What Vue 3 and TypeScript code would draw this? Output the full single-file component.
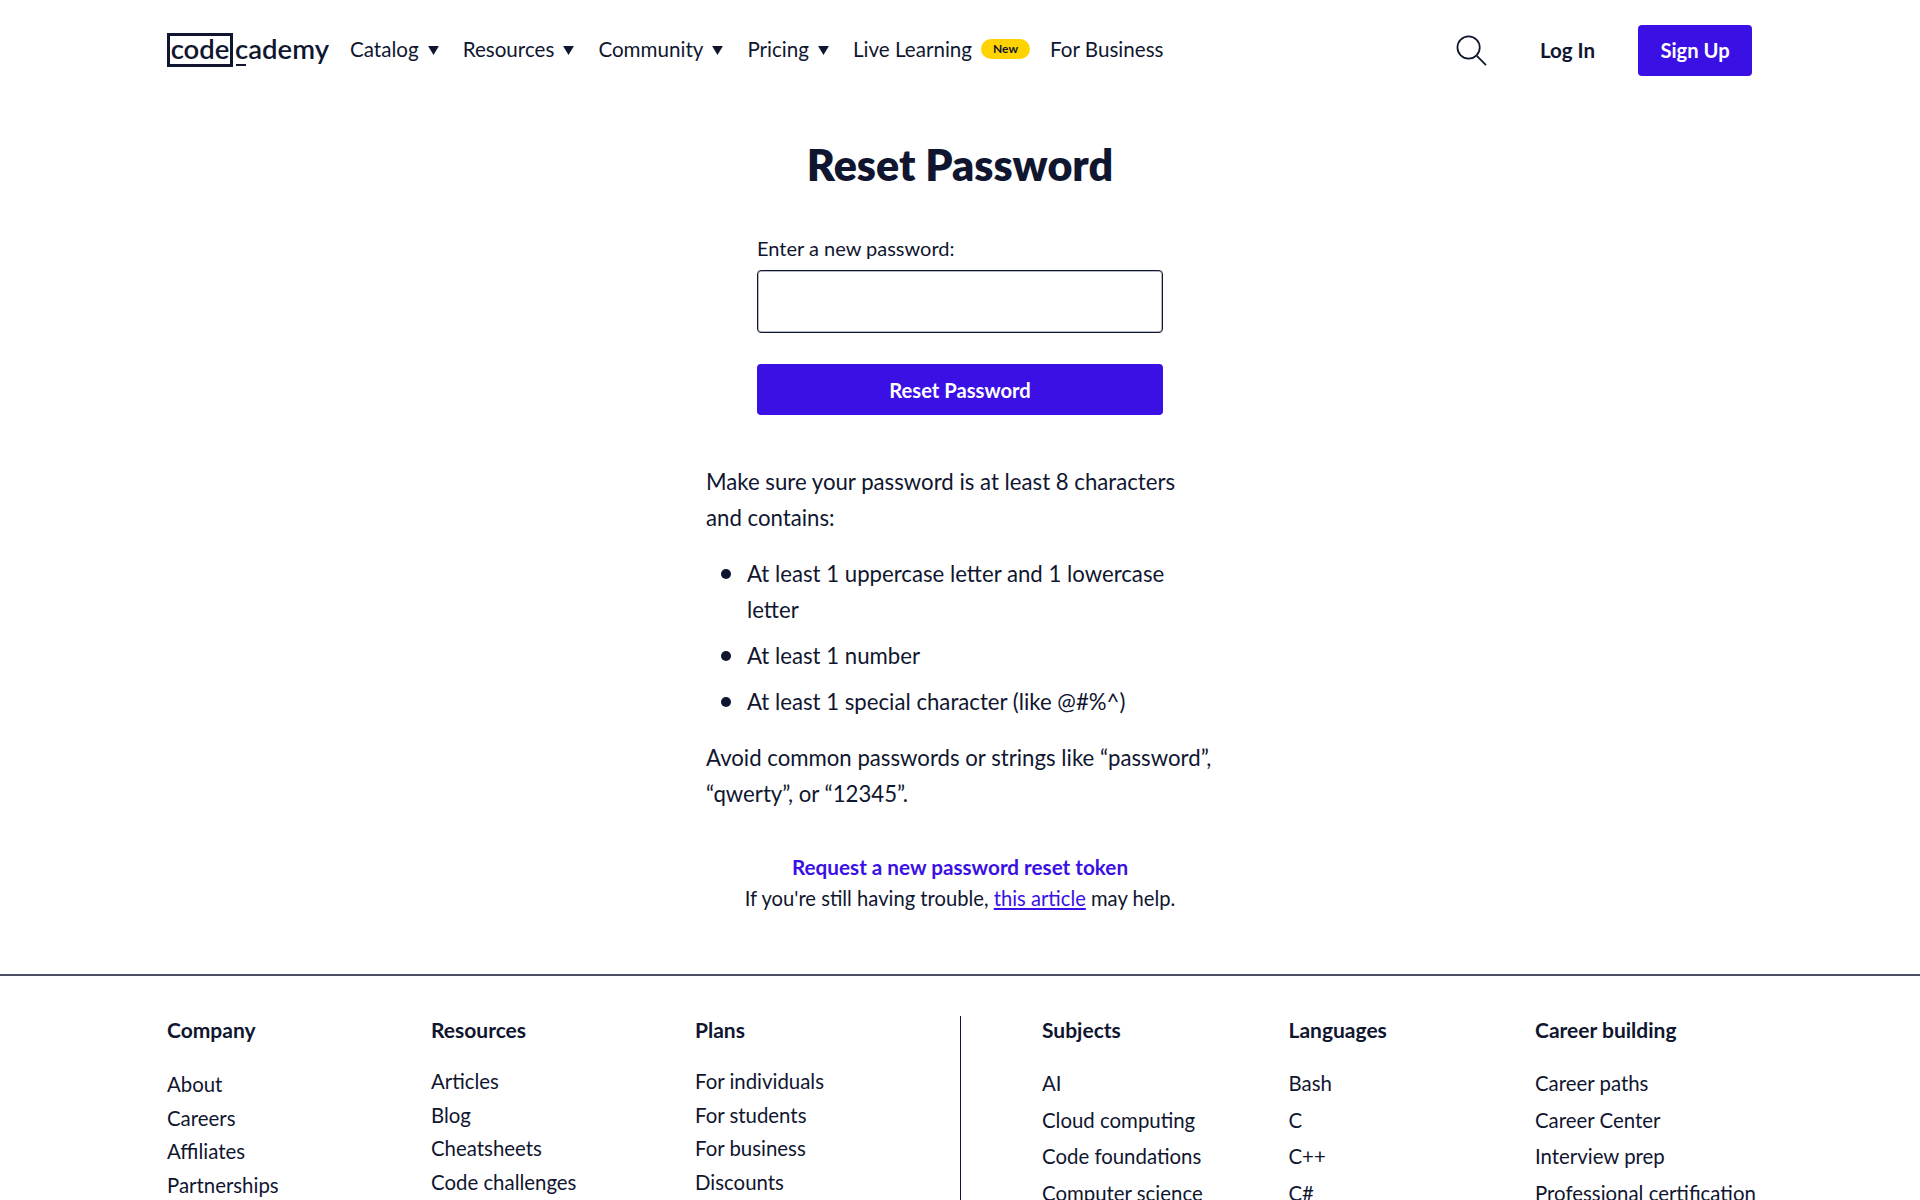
<script setup lang="ts">
interface NavItem {
  label: string
  caret?: boolean
  badge?: string
}

interface FooterColumn {
  title: string
  links: string[]
}

const navItems: NavItem[] = [
  { label: 'Catalog', caret: true },
  { label: 'Resources', caret: true },
  { label: 'Community', caret: true },
  { label: 'Pricing', caret: true },
  { label: 'Live Learning', badge: 'New' },
  { label: 'For Business' },
]

const leftColumns: FooterColumn[] = [
  { title: 'Company', links: ['About', 'Careers', 'Affiliates', 'Partnerships'] },
  { title: 'Resources', links: ['Articles', 'Blog', 'Cheatsheets', 'Code challenges'] },
  { title: 'Plans', links: ['For individuals', 'For students', 'For business', 'Discounts'] },
]

const rightColumns: FooterColumn[] = [
  { title: 'Subjects', links: ['AI', 'Cloud computing', 'Code foundations', 'Computer science'] },
  { title: 'Languages', links: ['Bash', 'C', 'C++', 'C#'] },
  { title: 'Career building', links: ['Career paths', 'Career Center', 'Interview prep', 'Professional certification'] },
]
</script>

<template>
  <div class="page">
    <header class="topbar">
      <a class="logo">
        <span class="logo-box">code</span><span class="logo-rest">cademy</span>
      </a>
      <nav class="nav">
        <a v-for="item in navItems" :key="item.label" class="nav-item">
          {{ item.label }}
          <svg v-if="item.caret" class="caret" viewBox="0 0 12 10" width="12" height="10">
            <path d="M0 0h12L6 10z" fill="#10162f" />
          </svg>
          <span v-if="item.badge" class="badge">{{ item.badge }}</span>
        </a>
      </nav>
      <div class="actions">
        <svg class="search" viewBox="0 0 32 32" width="31" height="31" fill="none" stroke="#10162f" stroke-width="1.8">
          <circle cx="13" cy="13" r="11.5" />
          <path d="M21.5 21.5L31 31" />
        </svg>
        <a class="login">Log In</a>
        <button class="signup">Sign Up</button>
      </div>
    </header>

    <main class="content">
      <h1 class="title">Reset Password</h1>
      <form class="form" @submit.prevent>
        <label class="label" for="new-password">Enter a new password:</label>
        <input id="new-password" class="input" type="password" />
        <button class="submit">Reset Password</button>
      </form>

      <div class="rules">
        <p>Make sure your password is at least 8 characters and contains:</p>
        <ul>
          <li>At least 1 uppercase letter and 1 lowercase letter</li>
          <li>At least 1 number</li>
          <li>At least 1 special character (like @#%^)</li>
        </ul>
        <p>Avoid common passwords or strings like “password”, “qwerty”, or “12345”.</p>
      </div>

      <div class="help">
        <a class="token-link">Request a new password reset token</a>
        <p>If you're still having trouble, <a class="article-link">this article</a> may help.</p>
      </div>
    </main>

    <footer class="footer">
      <div class="footer-inner">
        <div class="footer-left">
          <div v-for="(col, i) in leftColumns" :key="col.title" class="col" :class="{ 'col-tight': i > 0 }">
            <h3>{{ col.title }}</h3>
            <a v-for="link in col.links" :key="link">{{ link }}</a>
          </div>
        </div>
        <div class="footer-right">
          <div v-for="col in rightColumns" :key="col.title" class="col col-wide">
            <h3>{{ col.title }}</h3>
            <a v-for="link in col.links" :key="link">{{ link }}</a>
          </div>
        </div>
      </div>
    </footer>
  </div>
</template>

<style>
html,
body {
  margin: 0;
  background: #fff;
}
</style>

<style scoped>
.page {
  height: 1200px;
  overflow: hidden;
  color: #10162f;
  font-family: Lato, "Noto Sans", sans-serif;
}

.topbar {
  display: flex;
  align-items: center;
  height: 100px;
  padding: 0 168px 0 167px;
}

.logo {
  display: flex;
  flex-shrink: 0;
  align-items: center;
  width: 162px;
  font-size: 27.5px;
  font-weight: 600;
  line-height: 1;
}

.logo-box {
  box-sizing: border-box;
  width: 67px;
  height: 34px;
  border: 3px solid #10162f;
  text-align: center;
  line-height: 26px;
}

.logo-rest {
  margin-left: 2px;
  position: relative;
  top: -1px;
}

.logo-rest::after {
  content: "";
  position: absolute;
  left: 1px;
  bottom: -3px;
  width: 10px;
  height: 2px;
  background: #10162f;
}

.nav {
  display: flex;
  align-items: center;
  gap: 24px;
  margin-left: 21px;
  padding-bottom: 2px;
  font-size: 20.6px;
}

.nav-item {
  display: flex;
  align-items: center;
  gap: 9px;
}

.caret {
  width: 11px;
  height: 9px;
  margin-top: 3px;
}

.badge {
  margin-right: -4px;
  padding: 0 12px;
  background: #ffd300;
  border-radius: 10px;
  font-size: 12px;
  font-weight: 700;
  line-height: 20px;
}

.actions {
  display: flex;
  align-items: center;
  margin-left: auto;
}

.search {
  margin-right: 53px;
}

.login {
  margin-right: 43px;
  font-size: 20.5px;
  font-weight: 700;
}

.signup,
.submit {
  border: 0;
  border-radius: 4px;
  background: #3a10e5;
  color: #fff;
  font-family: inherit;
  font-size: 20.2px;
  font-weight: 700;
}

.signup {
  width: 114px;
  height: 51px;
}

.content {
  display: flex;
  flex-direction: column;
  align-items: center;
}

.title {
  margin: 38px 0 0;
  font-size: 43px;
  font-weight: 800;
  line-height: 54px;
}

.form {
  display: flex;
  flex-direction: column;
  width: 406px;
  margin-top: 43px;
}

.label {
  font-size: 20px;
  line-height: 26px;
  margin-bottom: 9px;
}

.input {
  box-sizing: border-box;
  height: 63px;
  border: 1px solid #10162f;
  border-radius: 4px;
  box-shadow: inset 0 0 0 1px rgba(16, 22, 47, 0.3);
}

.submit {
  height: 51px;
  margin-top: 31px;
}

.rules {
  width: 508px;
  margin-top: 49px;
  font-size: 22.2px;
  line-height: 36px;
}

.rules p {
  margin: 0;
}

.rules ul {
  margin: 20px 0;
  padding: 0 0 0 41px;
  list-style: none;
}

.rules li {
  position: relative;
  margin-top: 10px;
}

.rules li::before {
  content: "";
  position: absolute;
  left: -26px;
  top: 13px;
  width: 10px;
  height: 10px;
  border-radius: 50%;
  background: #10162f;
}

.help {
  margin-top: 40px;
  text-align: center;
  font-size: 20.2px;
  line-height: 31px;
}

.help p {
  margin: 0;
}

.token-link {
  color: #3a10e5;
  font-size: 20.7px;
  font-weight: 700;
}

.article-link {
  color: #3a10e5;
  text-decoration: underline;
}

.footer {
  margin-top: 60px;
  border-top: 2px solid #4a4f66;
}

.footer-inner {
  display: flex;
  padding: 40px 0 0 167px;
}

.footer-left {
  display: flex;
  width: 793px;
  border-right: 1px solid #10162f;
}

.footer-right {
  display: flex;
  padding-left: 81px;
}

.col {
  display: flex;
  flex-direction: column;
  width: 264px;
  font-size: 20.4px;
  line-height: 33.5px;
}

.col h3 {
  margin: 0 0 24px;
  font-size: 21px;
  font-weight: 700;
  line-height: 28px;
}

.col-tight h3 {
  margin-bottom: 21px;
}

.col-wide {
  width: 246.5px;
  line-height: 36.5px;
}

.col-wide h3 {
  margin-bottom: 21px;
}
</style>
